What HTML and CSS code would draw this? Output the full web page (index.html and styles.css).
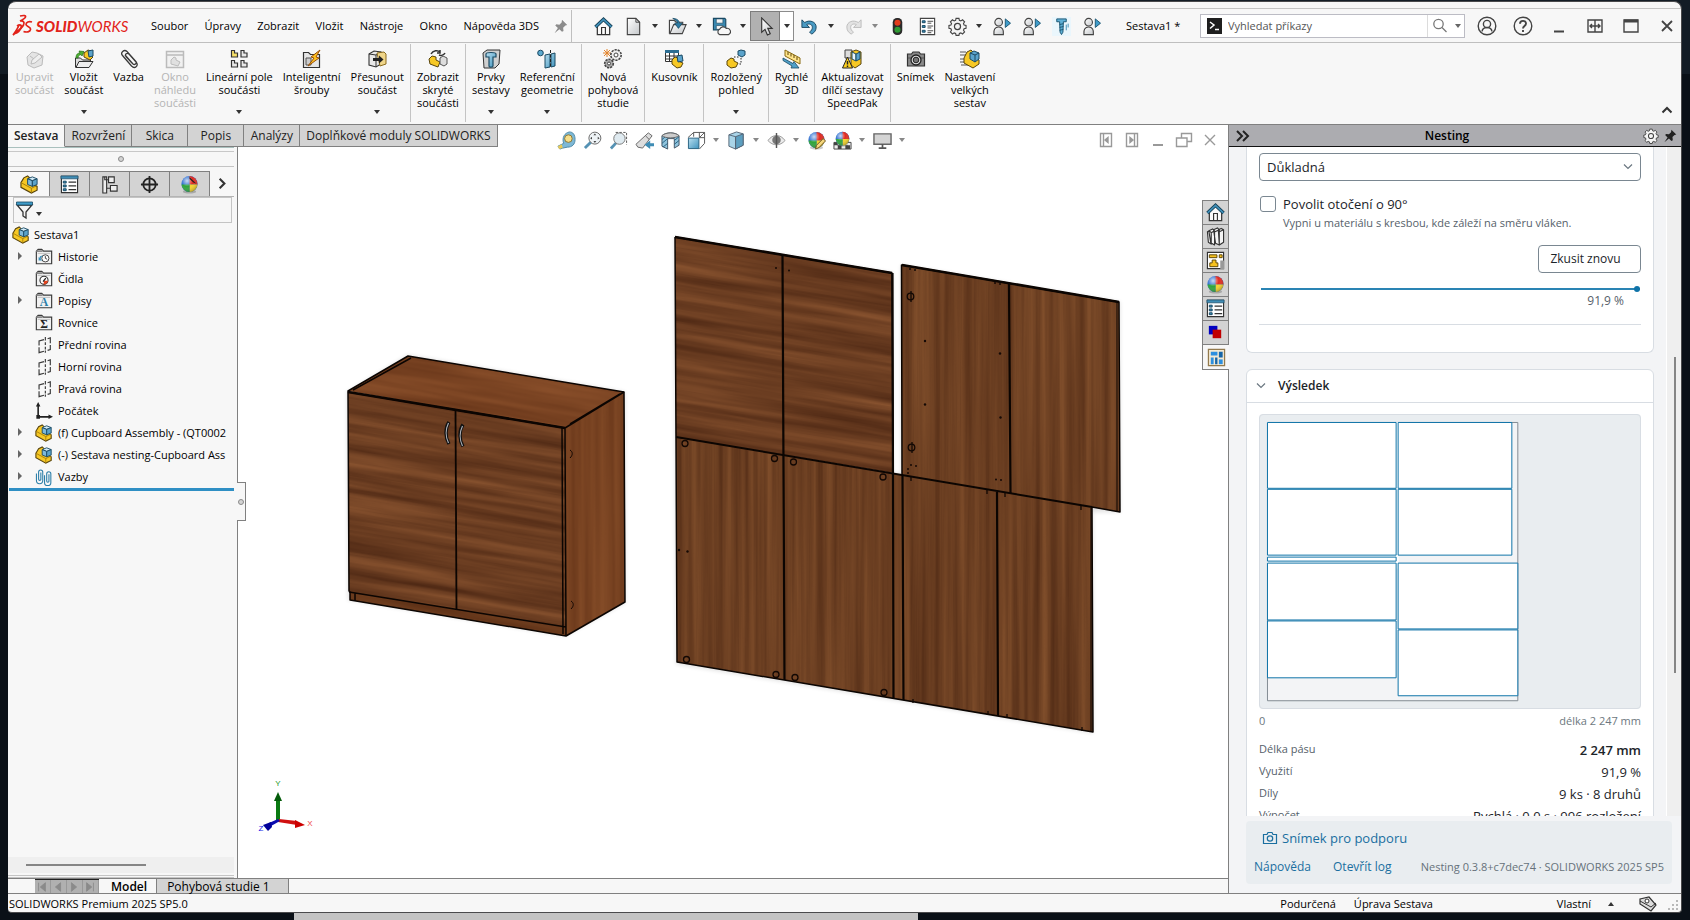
FILE: index.html
```html
<!DOCTYPE html>
<html lang="cs">
<head>
<meta charset="utf-8">
<title>SOLIDWORKS - Sestava1</title>
<link rel="stylesheet" href="styles.css">
</head>
<body>
<svg class="defs" aria-hidden="true">
  <defs>
    <linearGradient id="steel" x1="0" y1="0" x2="1" y2="1"><stop offset="0" stop-color="#fff"/><stop offset="1" stop-color="#c4c7ca"/></linearGradient>
    <linearGradient id="blue" x1="0" y1="0" x2="1" y2="1"><stop offset="0" stop-color="#b9dff0"/><stop offset="1" stop-color="#3f93bd"/></linearGradient>
    <radialGradient id="shine" cx=".35" cy=".3" r=".8"><stop offset="0" stop-color="#fff" stop-opacity=".75"/><stop offset=".45" stop-color="#fff" stop-opacity="0"/><stop offset="1" stop-color="#000" stop-opacity=".35"/></radialGradient>
  </defs>
  <symbol id="asm" viewBox="0 0 20 20">
    <path d="M1 8 4 3 8 1l2 2v5l8 4v4l-6 3-11-6z" fill="#f7c824" stroke="#59450c" stroke-width="1.2"/>
    <path d="M1 8l11 6v5M12 14l6-3" fill="none" stroke="#a87f08"/>
    <path d="M8 4l5-2 5 2-5 2z" fill="#d3ebf7" stroke="#1b4a63"/>
    <path d="M8 4l5 2v6l-5-2z" fill="#7fbadb" stroke="#1b4a63"/>
    <path d="M13 6l5-2v6l-5 2z" fill="#5ba3cb" stroke="#1b4a63"/>
  </symbol>
  <symbol id="folder" viewBox="0 0 20 20">
    <path d="M1.500 17.500V3.500l2-2h4l2 2h9v14z" fill="#f2f2f2" stroke="#3c3c3c" stroke-width="1.300"/>
    <path d="M1.500 3.500h7" stroke="#8a8a8a" stroke-width="2"/><path d="M3 6h14" stroke="#bbb"/>
  </symbol>
  <symbol id="plane" viewBox="0 0 20 20">
    <path d="M10 4 4.500 5.500v5M4.500 12.500v6L10 17M14 3l3-1v6M17 10v5l-3 1" fill="none" stroke="#3a3a3a" stroke-width="1.300"/>
    <path d="M11.500 1v4M11.500 7v3M11.500 12v3M11.500 16v2.500" stroke="#3a3a3a" stroke-width="1.300"/>
  </symbol>
  <symbol id="ball" viewBox="0 0 20 20">
    <ellipse cx="10" cy="17.500" rx="7" ry="2" fill="#000" opacity=".2"/>
    <circle cx="10" cy="9.500" r="8.500" fill="#2f6fd0"/>
    <path d="M10 1a8.500 8.500 0 0 1 8.400 9L10 10z" fill="#e02a20"/>
    <path d="M10 10h8.400A8.500 8.500 0 0 1 10 18z" fill="#f5d42a"/>
    <path d="M10 10v8a8.500 8.500 0 0 1-8.400-8z" fill="#2fa43c"/>
    <circle cx="10" cy="9.500" r="8.500" fill="url(#shine)"/>
  </symbol>
  <symbol id="list" viewBox="0 0 20 20">
    <path d="M1.500 1.500h17v17h-17z" fill="#fff" stroke="#333" stroke-width="1.200"/><path d="M1 1h18v3H1z" fill="#3f8db5" stroke="#22516b" stroke-width=".8"/>
    <path d="M3.500 6.500h3v2h-3zM3.500 10.500h3v2h-3zM3.500 14.500h3v2h-3z" fill="#3f8db5" stroke="#174862"/>
    <path d="M9 7.500h8M9 11.500h8M9 15.500h8" stroke="#333" stroke-width="1.300"/>
  </symbol>
  <symbol id="home" viewBox="0 0 20 20">
    <path d="M3.500 9v9.500h13V9L10 3z" fill="#fafafa" stroke="#333" stroke-width="1.300"/>
    <path d="M8 18v-7h4v7" fill="#fff" stroke="#333" stroke-width="1.200"/>
    <path d="M1.500 10.500 10 2.500l8.500 8" fill="none" stroke="#163f55" stroke-width="3.600"/><path d="M1.700 10.300 10 2.500l8.300 7.800" fill="none" stroke="#3f8fb8" stroke-width="1.800"/>
  </symbol>
  <symbol id="gear" viewBox="0 0 20 20">
    <path d="M8.300 1h3.400l.5 2.300 1.700.7 2-1.300 2.400 2.400-1.300 2 .7 1.700 2.300.5v3.400l-2.300.5-.7 1.700 1.300 2-2.400 2.400-2-1.300-1.700.7-.5 2.300H8.300l-.5-2.300-1.700-.7-2 1.300-2.400-2.400 1.300-2-.7-1.700L0 12.700V9.300l2.300-.5.700-1.700-1.300-2 2.400-2.400 2 1.300 1.700-.7z" transform="translate(1 .5) scale(.9)" fill="#f4f4f4" stroke="#444" stroke-width="1.300"/>
    <circle cx="10" cy="10" r="3.200" fill="none" stroke="#444" stroke-width="1.300"/>
  </symbol>
  <symbol id="person" viewBox="0 0 20 20">
    <path d="M2 18.500c-.5-5 1-8 5-8s5.500 3 5 8z" fill="url(#steel)" stroke="#444" stroke-width="1.200"/>
    <circle cx="7" cy="5.500" r="4" fill="url(#steel)" stroke="#444" stroke-width="1.200"/>
    <path d="M14 2l5.500 4.500L14 11z" fill="#3f9bc9" stroke="#1b5673"/>
  </symbol>
  <symbol id="pin" viewBox="0 0 20 20"><path d="M12 1l7 7-2.500.5-3 3 .5 4.500-2 1-3.500-3.500L2 19l4.500-7L3 8.500 4.500 7l4 .5 3-3z"/></symbol>
  <symbol id="caret" viewBox="0 0 8 8"><path d="M1 2h6L4 6z"/></symbol>
  <symbol id="clips" viewBox="0 0 20 20"><path d="M6.500 5v7.500a1 1 0 0 1-2.500 0V4.500a2.300 2.300 0 0 1 4.600 0v9.500a3.500 3.500 0 0 1-7 0V6M15.500 7v7.500a1 1 0 0 1-2.500 0V6.500a2.300 2.300 0 0 1 4.600 0V16a3.500 3.500 0 0 1-7 0V8" fill="none" stroke="#2b7ea8" stroke-width="1.200"/></symbol>
</svg>

<div class="window">
  <header class="titlebar">
    <div class="logo" role="img" aria-label="SOLIDWORKS">
      <svg width="22" height="24" viewBox="0 0 22 24" fill="none" stroke="#e2231a" stroke-width="1.700"><path d="M8 2c4-1 6-.5 5.500 1C13 4.500 10 6 8 7c3-.5 5 1 3.500 4C10 14 6 17 1 21c3-4 5-7 6-10"/><path d="M5 12c3-2 5-1 4 2-1 2.500-4 5-6 5.500"/><path d="M20 8c-3-1-6 0-6 2.500 0 2 5 2 4.500 5-.5 2.500-4 3-7 2"/></svg>
      <span class="logo-text"><b>SOLID</b>WORKS</span>
    </div>
    <nav class="menu">
      <a href="#">Soubor</a><a href="#">Úpravy</a><a href="#">Zobrazit</a><a href="#">Vložit</a><a href="#">Nástroje</a><a href="#">Okno</a><a href="#">Nápověda 3DS</a>
    </nav>
    <button class="menu-pin" aria-label="Připnout"><svg width="15" height="15" fill="#8c8c8c"><use href="#pin"/></svg></button>
    <div class="quick">
      <button class="ic" aria-label="Domů"><svg><use href="#home"/></svg></button>
      <button class="ic" aria-label="Nový"><svg viewBox="0 0 20 20"><path d="M3.500 1.500h9l4 4v13h-13z" fill="url(#steel)" stroke="#444" stroke-width="1.200"/><path d="M12.500 1.500v4h4" fill="none" stroke="#444"/></svg></button>
      <button class="dd" aria-label="Nový: volby"><svg><use href="#caret"/></svg></button>
      <button class="ic" aria-label="Otevřít"><svg viewBox="0 0 20 20"><path d="M1.500 17.500v-14h5l2 2h7v4" fill="url(#steel)" stroke="#444" stroke-width="1.200"/><path d="M2 17.500 6 8h13l-4 9.500z" fill="url(#steel)" stroke="#444" stroke-width="1.200"/><path d="M5 1.500c4 0 7 2 7 5h3L11 12 7 6.500h3c0-2-2-3.500-5-5z" fill="#2d7ba3" stroke="#174862" stroke-width=".8"/></svg></button>
      <button class="dd" aria-label="Otevřít: volby"><svg><use href="#caret"/></svg></button>
      <button class="ic" aria-label="Uložit"><svg viewBox="0 0 20 20"><path d="M1.500 1.500h12l1 1v11h-13z" fill="#3a89b1" stroke="#1b4a63" stroke-width="1.200"/><path d="M4.500 2h7v4.500h-7zM4.500 9h7v4h-7z" fill="#f4f4f4" stroke="#1b4a63" stroke-width=".7"/><path d="M8 18.500a3 3 0 0 1 0-5.500 4 4 0 0 1 7-1 3.500 3.500 0 0 1 2.500 6.500z" fill="#f7f7f7" stroke="#444" stroke-width="1.200"/></svg></button>
      <button class="dd" aria-label="Uložit: volby"><svg><use href="#caret"/></svg></button>
      <button class="ic selected" aria-label="Vybrat"><svg viewBox="0 0 20 20"><path d="M6 1v15l3.500-3 2.500 6 3-1.300-2.600-5.700H17z" fill="url(#steel)" stroke="#333" stroke-width="1.200"/></svg></button>
      <button class="dd boxed" aria-label="Vybrat: volby"><svg><use href="#caret"/></svg></button>
      <button class="ic" aria-label="Zpět"><svg viewBox="0 0 20 20"><path d="M2 3v8h8L7 8c3-1.500 6 0 6 3 0 2-1 3.500-3 5l2.500 2c3-2 4.500-4 4.500-7.500C17 5 10 2.500 5 5.800z" fill="#4a9bc4" stroke="#1b4a63"/></svg></button>
      <button class="dd" aria-label="Zpět: volby"><svg><use href="#caret"/></svg></button>
      <button class="ic" aria-label="Znovu"><svg viewBox="0 0 20 20"><path d="M18 3v8h-8l3-3c-3-1.500-6 0-6 3 0 2 1 3.500 3 5l-2.500 2C4.500 16 3 14 3 10.500 3 5 10 2.500 15 5.800z" fill="#e3e3e3" stroke="#bdbdbd"/></svg></button>
      <button class="dd dim" aria-label="Znovu: volby"><svg><use href="#caret"/></svg></button>
      <button class="ic" aria-label="Přestavět"><svg viewBox="0 0 20 20"><rect x="5" y="1" width="10" height="18" rx="4.500" fill="#2b2b2b"/><circle cx="10" cy="6" r="3.200" fill="#e33c1d"/><circle cx="10" cy="13.500" r="3.200" fill="#2f9a33"/></svg></button>
      <button class="ic" aria-label="Vlastnosti souboru"><svg viewBox="0 0 20 20"><path d="M2.500 1.500h15v17h-15z" fill="#fff" stroke="#444" stroke-width="1.200"/><path d="M4.500 4h3v2h-3zM4.500 9h3v2h-3zM4.500 14h3v2h-3z" fill="#3f8db5" stroke="#174862"/><path d="M10 4.500h6M10 6.500h4M10 9.500h6M10 11.500h4M10 14.500h6M10 16.500h4" stroke="#444"/></svg></button>
      <button class="ic" aria-label="Možnosti"><svg><use href="#gear"/></svg></button>
      <button class="dd" aria-label="Možnosti: volby"><svg><use href="#caret"/></svg></button>
      <button class="ic" aria-label="Makro 1"><svg><use href="#person"/></svg></button>
      <button class="ic" aria-label="Makro 2"><svg><use href="#person"/></svg></button>
      <button class="ic tint" aria-label="Šrouby"><svg viewBox="0 0 20 20"><path d="M5 2h10v3h-3l-.5 11L10 18.500 8.500 16 8 5H5z" fill="#5fb0d6" stroke="#1b5673"/><path d="M8 8l4-1M8 11l4-1M8 14l4-1" stroke="#1b5673"/><path d="M15 8v6M17 7v4" stroke="#3f8db5"/></svg></button>
      <button class="ic" aria-label="Makro 3"><svg><use href="#person"/></svg></button>
    </div>
    <span class="doc-name">Sestava1 *</span>
    <div class="search">
      <svg width="15" height="16" viewBox="0 0 15 16"><path d="M0 0h15v16H0z" fill="#1f1f1f"/><path d="M3 4l4 3-4 3.500M8 11.500h4" fill="none" stroke="#fff" stroke-width="1.500"/></svg>
      <input type="text" aria-label="Vyhledat příkazy" placeholder="Vyhledat příkazy">
      <button class="search-go" aria-label="Hledat"><svg width="16" height="16" viewBox="0 0 16 16" fill="none" stroke="#777" stroke-width="1.300"><circle cx="6.500" cy="6" r="4.700"/><path d="M10 9.500l4.500 4.500"/></svg><svg class="tiny"><use href="#caret"/></svg></button>
    </div>
    <div class="winbtns">
      <button aria-label="Účet"><svg viewBox="0 0 20 20"><circle cx="10" cy="10" r="8.800"/><circle cx="10" cy="8" r="3.600"/><path d="M5 15.500c.5-3.500 2.500-4 5-4s4.500.5 5 4"/></svg></button>
      <button aria-label="Nápověda"><svg viewBox="0 0 20 20"><circle cx="10" cy="10" r="8.800"/><path d="M7 7.800C7 4 13 4 13 7.500c0 2.500-3 2.500-3 5M10 14v2" stroke-width="1.900"/></svg></button>
      <button aria-label="Minimalizovat"><svg viewBox="0 0 20 20"><path d="M5 15.500h10" stroke-width="2"/></svg></button>
      <button aria-label="Rozdělit"><svg viewBox="0 0 20 20"><path d="M3 4h14v12H3zM10 4v12M5 10h10M7 8l-2 2 2 2M13 8l2 2-2 2"/></svg></button>
      <button aria-label="Maximalizovat"><svg viewBox="0 0 20 20"><path d="M3 4h14v12H3z"/><path d="M3 5h14" stroke-width="3"/></svg></button>
      <button aria-label="Zavřít"><svg viewBox="0 0 20 20"><path d="M5 5l10 10M15 5L5 15" stroke-width="1.800"/></svg></button>
    </div>
  </header>

  <div class="ribbon">
    <div class="group">
      <button disabled><svg viewBox="0 0 20 20"><path d="M2 8l5-5 5 1 6 3-1 9-8 3-6-3z" fill="#e4e4e4" stroke="#bbb"/><path d="M6 15l1-4 7-6 3 3-7 6zM5 7l4 3" fill="#efefef" stroke="#bbb"/></svg><span>Upravit<br>součást</span></button>
      <button><svg viewBox="0 0 20 20"><path d="M1.500 18.500V9h5l2 2h8v3" fill="#ddd" stroke="#333"/><path d="M2 18.500l3-6h14l-4 6z" fill="#eee" stroke="#333"/><path d="M2 9c0-4 2-5 4-5L5 2l5 .5L8 7 7 5.500C5 6 4 7 4 9z" fill="#4fb233" stroke="#1d6a12" stroke-width=".7"/><path d="M10 4l4-3 3 1v4l2 2-3 3-6-3z" fill="#f7c824" stroke="#59450c"/><path d="M14 2l5-1v6l-4 1z" fill="#5ba3cb" stroke="#1b4a63"/></svg><span>Vložit<br>součást</span><svg class="tiny"><use href="#caret"/></svg></button>
      <button><svg viewBox="0 0 20 20"><path d="M6 6l8 9a2 2 0 0 0 3-2.500L8 2.500C5 0 1 3.500 3.500 6.500l9 10.500c3.500 3.500 7-.5 5-3.500L10 5C8 3.500 5.500 5 7 7.500l6 6.500" fill="none" stroke="#3a3a3a" stroke-width="1.300"/></svg><span>Vazba</span></button>
      <button disabled><svg viewBox="0 0 20 20"><path d="M1.500 2.500h17v16h-17zM1.500 6h17" fill="#f1f1f1" stroke="#bbb" stroke-width="1.500"/><path d="M6 11l3-3 2 1v2l4 2-2 4-7-2z" fill="#e0e0e0" stroke="#bbb"/></svg><span>Okno<br>náhledu<br>součásti</span></button>
      <button><svg viewBox="0 0 20 20" stroke="#333" stroke-width="1.200"><path d="M2.500 8V1.500h3V4h3v4z" fill="#f7e06a"/><path d="M12 8V1.500h3V4h3v4zM2.500 18v-6.500h3V14h3v4zM12 18v-6.500h3V14h3v4z" fill="#e8e8e8"/></svg><span>Lineární pole<br>součásti</span><svg class="tiny"><use href="#caret"/></svg></button>
      <button><svg viewBox="0 0 20 20"><path d="M1.500 18.500v-15h5l2 2h9v13z" fill="#e6e6e6" stroke="#333" stroke-width="1.200"/><path d="M4 9h5v7H4z" fill="#ccc" stroke="#555"/><path d="M18 1l-9 7 3 1-6 8 11-8-3-1z" fill="#ffc21e" stroke="#9a4f06"/></svg><span>Inteligentní<br>šrouby</span></button>
      <button><svg viewBox="0 0 20 20"><path d="M2 5l5-3 7 1v12l-5 3-7-2z" fill="#e8e8e8" stroke="#333" stroke-width="1.100"/><path d="M2 5l7 1v12M9 6l5-3" fill="none" stroke="#333"/><path d="M10 4l7-1 2 2v10l-6 2z" fill="#f0d68a" stroke="#8b6b1d"/><path d="M6 9h6V6.500l4.500 4-4.500 4V12H6z" fill="#222"/></svg><span>Přesunout<br>součást</span><svg class="tiny"><use href="#caret"/></svg></button>
    </div>
    <div class="group">
      <button><svg viewBox="0 0 20 20"><path d="M1 10l3-3 4 1v3l4 2-2 5-8-3z" fill="#f7c824" stroke="#59450c"/><path d="M12 9l3-2 4 2v6l-3 2-4-2z" fill="#ddd" stroke="#555"/><path d="M3 5c2-4 7-4 9-2M12 1v3H9M17 4c-1 2-4 3-6 2" fill="none" stroke="#333" stroke-width="1.500"/></svg><span>Zobrazit<br>skryté<br>součásti</span></button>
    </div>
    <div class="group">
      <button><svg viewBox="0 0 20 20"><path d="M2 4l4-3h13l-1 14-4 4H3z" fill="#cfcfcf" stroke="#333"/><path d="M5 5c0-2 10-2 10 0v3h-3v9c0 1.500-4 1.500-4 0V8H5z" fill="url(#blue)" stroke="#1b4a63" stroke-width="1.200"/></svg><span>Prvky<br>sestavy</span><svg class="tiny"><use href="#caret"/></svg></button>
      <button><svg viewBox="0 0 20 20"><circle cx="3.500" cy="4" r="2.800" fill="#5ba9cf" stroke="#1b4a63"/><path d="M8 6l5-1v13l-5 1zM14 5l4-1v13l-4 1z" fill="url(#blue)" stroke="#1b4a63"/><path d="M13.500 1v18" stroke="#222" stroke-dasharray="3 1.500"/></svg><span>Referenční<br>geometrie</span><svg class="tiny"><use href="#caret"/></svg></button>
    </div>
    <div class="group">
      <button><svg viewBox="0 0 20 20"><path d="M4 0v8M0 4h8M1 1l6 6M7 1L1 7" stroke="#e2832a"/><circle cx="13" cy="6" r="5.200" fill="#eee" stroke="#444" stroke-width="1.600" stroke-dasharray="2.200 1"/><circle cx="13" cy="6" r="2" fill="#fff" stroke="#444"/><circle cx="6" cy="14.500" r="4.300" fill="#aaa" stroke="#444" stroke-width="1.600" stroke-dasharray="2.200 1"/><circle cx="6" cy="14.500" r="1.500" fill="#fff" stroke="#444"/></svg><span>Nová<br>pohybová<br>studie</span></button>
    </div>
    <div class="group">
      <button><svg viewBox="0 0 20 20"><path d="M1.500 1.500h13v11h-13z" fill="#fff" stroke="#333"/><path d="M1 1h14v3H1z" fill="#2b6d92"/><path d="M1 7h14M1 10h14M5.500 4v8M10 4v8" stroke="#333"/><path d="M8 11l3-3 3 1v3l5 2-2 4-4 1-5-4z" fill="#f7c824" stroke="#59450c"/><path d="M13 7l5-1 1 6-5 1z" fill="#5ba3cb" stroke="#1b4a63"/></svg><span>Kusovník</span></button>
    </div>
    <div class="group">
      <button><svg viewBox="0 0 20 20"><path d="M1 12l4-3 3 1v2l4 2-2 4-5 1-4-3z" fill="#f7c824" stroke="#59450c"/><path d="M12 2l3-1 4 1v4l-3 2-4-2z" fill="#5ba3cb" stroke="#1b4a63"/><path d="M15 9v6h-3M8 8h6" fill="none" stroke="#222" stroke-dasharray="1.500 1.500"/></svg><span>Rozložený<br>pohled</span><svg class="tiny"><use href="#caret"/></svg></button>
    </div>
    <div class="group">
      <button><svg viewBox="0 0 20 20"><path d="M3 1l15 8v6L3 7z" fill="#ffe48a" stroke="#8a6a10"/><path d="M6 3v3M9 4.500v3M12 6v3M15 8v3" stroke="#5c4608"/><path d="M1 9l10 5.500 1-2 5 6.500-8 0 1-2L1 11.500z" fill="#4fa0c9" stroke="#1b4a63" stroke-width=".8"/></svg><span>Rychlé<br>3D</span></button>
    </div>
    <div class="group">
      <button><svg viewBox="0 0 20 20"><path d="M3 1h7v8H3z" fill="#ddd" stroke="#444"/><path d="M9 3l5-2 5 2v12l-6 4-4-3z" fill="#f7c824" stroke="#59450c"/><path d="M10 3l4 2v7l-4-2z" fill="#eaf5fb" stroke="#1b4a63"/><path d="M14 5l4-2v7l-4 2z" fill="#5ba3cb" stroke="#1b4a63"/><path d="M5.500 8L10.500 19H.5z" fill="#ffd21e" stroke="#222"/><path d="M5.500 12v3.500M5.500 16.500V18" stroke="#222" stroke-width="1.500"/></svg><span>Aktualizovat<br>dílčí sestavy<br>SpeedPak</span></button>
    </div>
    <div class="group">
      <button><svg viewBox="0 0 20 20"><path d="M1.500 5h4l1.500-2h6l1.500 2h4v12h-17z" fill="#8a8a8a" stroke="#333" stroke-width="1.200"/><path d="M2 9h16" stroke="#555"/><circle cx="10" cy="11" r="5" fill="#ddd" stroke="#222" stroke-width="1.300"/><circle cx="10" cy="11" r="2.800" fill="#777" stroke="#222"/></svg><span>Snímek</span></button>
      <button><svg viewBox="0 0 20 20"><path d="M0 3h6M0 6h6M0 10h6M0 13h8M1 16h8" stroke="#555"/><path d="M4 9l3-6 4-2 2 2v5l6 3v4l-6 4-9-5z" fill="#f7c824" stroke="#59450c"/><path d="M10 4l4-2 5 2v6l-4 3-5-3z" fill="#5ba3cb" stroke="#1b4a63"/><path d="M10 4l5 2v7M15 6l4-2" fill="none" stroke="#1b4a63"/></svg><span>Nastavení<br>velkých<br>sestav</span></button>
    </div>
    <button class="collapse" aria-label="Sbalit"><svg width="12" height="8" viewBox="0 0 12 8"><path d="M1.500 6.500L6 2l4.500 4.500" fill="none" stroke="#333" stroke-width="2"/></svg></button>
  </div>

  <main class="main">
    <div class="work">
      <nav class="cmd-tabs" aria-label="Karty příkazů">
        <button class="active">Sestava</button><button>Rozvržení</button><button>Skica</button><button>Popis</button><button>Analýzy</button><button>Doplňkové moduly SOLIDWORKS</button>
      </nav>
      <div class="upper">
        <aside class="tree-panel">
          <div class="grip-bar"><i class="knob"></i></div>
          <div class="tree-tabs">
            <button class="active" aria-label="Strom"><svg><use href="#asm"/></svg></button>
            <button aria-label="Vlastnosti"><svg><use href="#list"/></svg></button>
            <button aria-label="Konfigurace"><svg viewBox="0 0 20 20" fill="#eee" stroke="#333" stroke-width="1.200"><path d="M3 2h4v17H3zM7 5h4M7 14h4M5 2v3h2"/><path d="M9 2h6v6H9zM11 11h7v6h-7z"/></svg></button>
            <button aria-label="Kóty"><svg viewBox="0 0 20 20" fill="none" stroke="#222" stroke-width="1.900"><circle cx="10" cy="10" r="6.500"/><path d="M10 1v18M1 10h18"/></svg></button>
            <button aria-label="Vzhledy"><svg viewBox="0 0 20 20"><use href="#ball"/><path d="M10 2l7 7-3-1-4-4z" fill="#222"/></svg></button>
            <button class="more" aria-label="Další"><svg viewBox="0 0 20 20" fill="none" stroke="#333" stroke-width="2.200"><path d="M7 5l5 5-5 5"/></svg></button>
          </div>
          <button class="filter" aria-label="Filtr"><svg width="20" height="20" viewBox="0 0 20 20"><path d="M2 5h15l-6 7v6l-3-2v-4z" fill="#f3f3f3" stroke="#333" stroke-width="1.300"/><path d="M1.500 2h16v3h-16z" fill="#3f9cc9" stroke="#1b4a63" stroke-width=".8"/></svg><svg class="tiny"><use href="#caret"/></svg></button>
          <ul class="tree">
            <li class="root"><svg><use href="#asm"/></svg><span>Sestava1</span></li>
            <li class="ex"><svg viewBox="0 0 20 20"><use href="#folder"/><circle cx="11.500" cy="11.500" r="4" fill="#fff" stroke="#333"/><path d="M11.500 9v2.500l2 1" fill="none" stroke="#333"/><path d="M4 10v4h4l-1.500-1.500C6 11 7 9.500 9 9 7 8 5 9 5 11z" fill="#3a8fba"/></svg><span>Historie</span></li>
            <li><svg viewBox="0 0 20 20"><use href="#folder"/><circle cx="10" cy="11.500" r="4.500" fill="#fff" stroke="#333" stroke-width="1.200"/><path d="M10 12l4.500 0a4.500 4.500 0 0 1-5 4z" fill="#e2431e"/><path d="M9 13l3-4" stroke="#222" stroke-width="1.500"/></svg><span>Čidla</span></li>
            <li class="ex"><svg viewBox="0 0 20 20"><use href="#folder"/><text x="10" y="16" class="glyph blue">A</text></svg><span>Popisy</span></li>
            <li><svg viewBox="0 0 20 20"><use href="#folder"/><text x="10" y="16" class="glyph">Σ</text></svg><span>Rovnice</span></li>
            <li><svg><use href="#plane"/></svg><span>Přední rovina</span></li>
            <li><svg><use href="#plane"/></svg><span>Horní rovina</span></li>
            <li><svg><use href="#plane"/></svg><span>Pravá rovina</span></li>
            <li><svg viewBox="0 0 20 20"><path d="M3.500 3v13.500H17" fill="none" stroke="#222" stroke-width="1.800"/><path d="M3.500 0L6 5H1zM20 16.500L15 14v5zM1.500 14.500h4v4h-4z" fill="#222"/></svg><span>Počátek</span></li>
            <li class="ex"><svg><use href="#asm"/></svg><span>(f) Cupboard Assembly - (QT0002</span></li>
            <li class="ex"><svg><use href="#asm"/></svg><span>(-) Sestava nesting-Cupboard Ass</span></li>
            <li class="ex"><svg><use href="#clips"/></svg><span>Vazby</span></li>
          </ul>
          <div class="rollback"></div>
          <div class="hscroll"><i></i></div>
          <div class="foot-lines"></div>
        </aside>

        <section class="view" aria-label="Grafická oblast">
          <svg class="scene" viewBox="238 125 990 753" preserveAspectRatio="xMidYMid meet">
            <defs>
              <filter id="grainH" x="0" y="0" width="100%" height="100%" color-interpolation-filters="sRGB"><feTurbulence type="fractalNoise" baseFrequency=".004 .1" numOctaves="5" seed="8"/><feColorMatrix values=".3 0 0 0 .27  .22 0 0 0 .13  .14 0 0 0 .06  0 0 0 0 1"/></filter>
              <filter id="grainV" x="0" y="0" width="100%" height="100%" color-interpolation-filters="sRGB"><feTurbulence type="fractalNoise" baseFrequency=".12 .002" numOctaves="5" seed="5"/><feColorMatrix values=".24 0 0 0 .3  .18 0 0 0 .155  .11 0 0 0 .075  0 0 0 0 1"/></filter>
              <filter id="grainT" x="0" y="0" width="100%" height="100%" color-interpolation-filters="sRGB"><feTurbulence type="fractalNoise" baseFrequency=".006 .09" numOctaves="3" seed="3"/><feColorMatrix values=".2 0 0 0 .38  .15 0 0 0 .19  .1 0 0 0 .085  0 0 0 0 1"/></filter>
              <filter id="grainS" x="0" y="0" width="100%" height="100%" color-interpolation-filters="sRGB"><feTurbulence type="fractalNoise" baseFrequency=".1 .002" numOctaves="3" seed="11"/><feColorMatrix values=".18 0 0 0 .38  .14 0 0 0 .19  .09 0 0 0 .085  0 0 0 0 1"/></filter>
              <filter id="soft"><feGaussianBlur stdDeviation="2"/></filter>
              <clipPath id="doors"><path d="M348 392l217 36 1 199-217-35z"/></clipPath>
              <clipPath id="lid"><path d="M348 391l60-35 216 36-59 36z"/></clipPath>
              <clipPath id="side"><path d="M565 428l59-36 1 210-59 34z"/></clipPath>
              <clipPath id="plinth"><path d="M350 590l216 36v10l-216-36z"/></clipPath>
              <clipPath id="p12"><path d="M675 237l217 36 1 200-217-36z"/></clipPath>
              <clipPath id="pv"><path d="M902 265l217 37 1 210-28-5 1 225-416-70-1-225 226 38z"/></clipPath>
            </defs>
            <g fill="#000" opacity=".12" filter="url(#soft)"><path d="M347 392l61-37 217 37v211l-60 33-217-36zM674 237l219 36v200h8V265l219 37v210h-27v221L676 664z"/></g>
            <g clip-path="url(#plinth)"><rect x="340" y="500" width="240" height="60" transform="skewY(9.400)" filter="url(#grainT)"/><path d="M340 580h240v60H340z" fill="#3c1e0c" opacity=".25"/></g>
            <g clip-path="url(#doors)"><rect x="346" y="320" width="224" height="230" transform="skewY(9.400)" filter="url(#grainH)"/></g>
            <g clip-path="url(#lid)"><rect x="346" y="240" width="290" height="150" transform="skewY(9.400)" filter="url(#grainT)"/></g>
            <g clip-path="url(#side)"><rect x="560" y="390" width="70" height="250" filter="url(#grainS)"/></g>
            <g clip-path="url(#p12)"><rect x="670" y="110" width="230" height="240" transform="skewY(9.400)" filter="url(#grainH)"/></g>
            <g clip-path="url(#pv)"><rect x="670" y="260" width="455" height="480" filter="url(#grainV)"/></g>
            <g fill="none" stroke="#0b0502" stroke-width="1.500" stroke-linejoin="round">
              <path d="M348 391l60-35 216 36 1 210-59 34-216-36v-8l-1-1z"/>
              <path d="M348 392l217 36 59-36M565 428l1 208M349 592l217 35M355 593v8M353 390l58-32M570 424l50-30M562 427l1 207"/>
              <path d="M348 392l217 36" stroke-width="2.500"/><path d="M455.500 411l1 199" stroke-width="1.800"/>
              <path d="M675 237l217 36 1 200M676 437l-1-200M902 475l-.5-210L1119 302l1 210-28-5 1 225-416-70-1-225"/>
              <path d="M675 237l217 36M902 265l217 37" stroke-width="2.600"/>
              <path d="M676 437l416 70" stroke-width="2"/>
              <path d="M782.500 255l2 425M892.500 273l1 426M902.500 475l1 225M1009 283l1.500 210M997 492l1 224" stroke-width="2.200"/>
              <path d="M1117 303v208M1091 508v223" stroke-width="1"/>
            </g>
            <g fill="none" stroke="#120804" stroke-width="1.300">
              <circle cx="685" cy="443.500" r="3"/><circle cx="774.500" cy="458.500" r="3"/><circle cx="793.500" cy="462" r="3"/><circle cx="883" cy="477" r="3"/>
              <circle cx="686.500" cy="659.500" r="3"/><circle cx="776" cy="674.500" r="3"/><circle cx="795" cy="677.500" r="3"/><circle cx="884" cy="692.500" r="3"/>
              <circle cx="910.500" cy="296.500" r="3.300"/><circle cx="911.500" cy="447.500" r="3.300"/><path d="M911 291v11M912 442v11"/>
              <path d="M911 477v4M987 490v4M1005 493v4M1081 506v4M913 699v4M988 711v4M1007 714v4M1082 727v4"/>
              <path d="M570 450c3 2 3 5 0 8M571 601c3 2 3 5 0 8" stroke-width="1"/>
            </g>
            <g fill="#140905"><circle cx="776" cy="268" r="1"/><circle cx="789" cy="270.500" r="1"/><circle cx="925" cy="341" r="1.200"/><circle cx="925" cy="404.500" r="1.200"/><circle cx="1000" cy="353.500" r="1.200"/><circle cx="1000.500" cy="417.500" r="1.200"/><circle cx="911" cy="465" r="1"/><circle cx="916" cy="466" r="1"/><circle cx="908" cy="469" r="1"/><circle cx="908" cy="473" r="1"/><circle cx="996" cy="479.500" r="1"/><circle cx="1001" cy="480" r="1"/><circle cx="679" cy="550" r="1.200"/><circle cx="687.500" cy="551.500" r="1.200"/><circle cx="910" cy="269" r="1"/><circle cx="915" cy="270" r="1"/><circle cx="995" cy="283" r="1"/><circle cx="1000" cy="284" r="1"/></g>
            <g fill="none"><path d="M449 422c-4 6-4 15 0 22M463 424.500c-4 6-4 15 0 22" stroke="#111" stroke-width="3.400"/><path d="M448.500 423c-3 6-3 14 0 20M462.500 426c-3 6-3 14 0 20" stroke="#aab0b8" stroke-width="1.200"/></g>
            <g class="triad">
              <path d="M276 797h4v24h-4z" fill="#0a7a12"/><path d="M278 792l4 9h-8z" fill="#045c0a"/>
              <path d="M279 819l18 2v4l-19-3z" fill="#d01010"/><path d="M305 825l-10-5v8z" fill="#c00"/>
              <path d="M278 819l-9 4 2 3 9-5z" fill="#0a0ab0"/><path d="M263 825l8-3 1 5-4 4z" fill="#00009a"/>
              <text x="278" y="786" fill="#1f9a2b">Y</text><text x="310" y="826" fill="#f04a4a">X</text><text x="261" y="831" fill="#1414e6">Z</text>
            </g>
          </svg>

          <div class="hud">
            <div class="hud-tools">
              <button aria-label="Měřit"><svg viewBox="0 0 20 20"><path d="M1 16l6-3c-2-6 1-11 6-12 4 0 6 3 6 8s-3 8-8 8l-5 1-3 1z" fill="#7db8d6" stroke="#4d87a5"/><circle cx="12" cy="8" r="4" fill="#f6df8a" stroke="#8a7430"/><path d="M1 16l4-2 1 4-4 1z" fill="#e9c958"/></svg></button>
              <button aria-label="Lupa"><svg viewBox="0 0 20 20"><path d="M9 11L2 18" stroke="#5592b4" stroke-width="3"/><circle cx="12.500" cy="7.500" r="6.300" fill="#eef3f6" stroke="#666"/><path d="M12.500 2.500l1.500 2h-3zM12.500 12.500l1.500-2h-3zM7.500 7.500l2-1.500v3zM17.500 7.500l-2-1.500v3z" fill="#444"/></svg></button>
              <button aria-label="Lupa oblasti"><svg viewBox="0 0 20 20"><path d="M7 1.500h11.500v13" fill="none" stroke="#555" stroke-dasharray="2.500 1.500"/><path d="M8 12L2 18.500" stroke="#5592b4" stroke-width="3"/><circle cx="11" cy="8" r="6" fill="#dfeaf0" stroke="#777"/></svg></button>
              <button aria-label="Předchozí pohled"><svg viewBox="0 0 20 20"><path d="M1 14L14 2l4 3-10 13-5-1z" fill="#ddd" stroke="#666"/><path d="M11 5l4 4" stroke="#666"/><path d="M20 13h-4v-3l-6 4.500 6 4.500v-3h4z" fill="#3f8db5"/></svg></button>
              <button aria-label="Řez"><svg viewBox="0 0 20 20"><path d="M1 5c4-4 14-4 18 0v10l-5 3V8H7v11l-6-3z" fill="#8fc3dd" stroke="#456"/><path d="M1 9l6-5M1 13l6-5M2 17l5-4M14 10l5-4M14 14l5-4" stroke="#27617f"/><path d="M1 5c4-4 14-4 18 0-4 3-14 3-18 0z" fill="#ccc" stroke="#666"/></svg></button>
              <button aria-label="Orientace"><svg viewBox="0 0 20 20"><path d="M7 1.500h11.500V13M7 1.500V6M18.500 1.500L13 7M13 1.500V7M18 7h-5M1 7l6-5.500M13 19l5.500-6" fill="none" stroke="#555"/><path d="M1.500 7.500h11v11h-11z" fill="url(#blue)" stroke="#27617f"/></svg></button>
              <button class="dd" aria-label="Orientace: volby"><svg><use href="#caret"/></svg></button>
              <button aria-label="Styl"><svg viewBox="0 0 20 20"><path d="M2 4l8-3 7 2v12l-8 4-7-3z" fill="#a9d4e8" stroke="#567"/><path d="M9 6l8-3v12l-8 4z" fill="#5c9fc0" stroke="#567"/><path d="M2 4l7 2v13" fill="none" stroke="#567"/></svg></button>
              <button class="dd" aria-label="Styl: volby"><svg><use href="#caret"/></svg></button>
              <button aria-label="Skrýt"><svg viewBox="0 0 20 20"><path d="M1 10c5-7 13-7 18 0-5 6-13 6-18 0z" fill="#ececec" stroke="#999"/><circle cx="10" cy="9.500" r="4.500" fill="#777"/><path d="M10 2v16" stroke="#555" stroke-width="1.500"/></svg></button>
              <button class="dd" aria-label="Skrýt: volby"><svg><use href="#caret"/></svg></button>
              <button aria-label="Vzhled"><svg viewBox="0 0 20 20"><use href="#ball"/><path d="M9 19l1-4 7-7 2.500 2.500-7 7z" fill="#f4d67c" stroke="#6b531a"/></svg></button>
              <button aria-label="Scéna"><svg viewBox="0 0 20 20"><path d="M1 12h18v7H1z" fill="#eee" stroke="#444"/><path d="M1 12h4v3H1zM9 12h4v3H9zM5 15h4v4H5zM13 15h5v4h-5z" fill="#444"/><use href="#ball" x="1.500" width="17" height="17"/></svg></button>
              <button class="dd" aria-label="Scéna: volby"><svg><use href="#caret"/></svg></button>
              <button aria-label="Zobrazení"><svg viewBox="0 0 20 20"><path d="M1 3h18v11H1z" fill="#d4d4d4" stroke="#666" stroke-width="1.500"/><path d="M10 14v4M6 18h8" stroke="#555" stroke-width="1.800"/></svg></button>
              <button class="dd" aria-label="Zobrazení: volby"><svg><use href="#caret"/></svg></button>
            </div>
            <div class="hud-win">
              <button aria-label="Panel vlevo"><svg viewBox="0 0 20 20"><path d="M4.500 3.500h11v13h-11zM7.500 3.500v13"/><path d="M12 7.500v5L9 10z" fill="#999"/></svg></button>
              <button aria-label="Panel vpravo"><svg viewBox="0 0 20 20"><path d="M4.500 3.500h11v13h-11zM12.500 3.500v13"/><path d="M8 7.500v5l3-2.500z" fill="#999"/></svg></button>
              <button aria-label="Minimalizovat dokument"><svg viewBox="0 0 20 20"><path d="M5 15h10" stroke-width="2"/></svg></button>
              <button aria-label="Obnovit dokument"><svg viewBox="0 0 20 20"><path d="M7.500 8V3.500h10v8H13M2.500 8H13v8.500H2.500z"/></svg></button>
              <button aria-label="Zavřít dokument"><svg viewBox="0 0 20 20"><path d="M5 5l10 10M15 5L5 15"/></svg></button>
            </div>
          </div>
          <button class="splitter" aria-label="Skrýt strom"><i class="knob"></i></button>
          <nav class="task-tabs" aria-label="Podokno úloh">
            <button aria-label="Zdroje"><svg><use href="#home"/></svg></button>
            <button aria-label="Knihovna"><svg viewBox="0 0 20 20" fill="#f4f4f4" stroke="#333" stroke-width="1.200" stroke-linejoin="round"><path d="M13 3l3-1.500 2.500 1.500v13L14 19zM8 3l4-2 2 2v16l-4-2zM3 4l4-2 2 2v15l-4-2.500zM1.500 5l2-1 2 2v12l-3-2zM5.500 6L9 4M9.500 5L14 3M14 5l4.500-2"/></svg></button>
            <button aria-label="Paleta"><svg viewBox="0 0 20 20"><path d="M1.500 1.500h17v17h-17z" fill="#fff" stroke="#333" stroke-width="1.200"/><path d="M3.500 4h8v3h-8zM14 4h3v3h-3zM6.500 9.500h4v3h2v4H4v-4h2.500z" fill="#f7c21e" stroke="#5c4608"/><path d="M15 10h4v9h-4z" fill="#999"/></svg></button>
            <button aria-label="Vzhledy a scény"><svg><use href="#ball"/></svg></button>
            <button aria-label="Vlastní vlastnosti"><svg><use href="#list"/></svg></button>
            <button aria-label="Porovnání"><svg viewBox="0 0 20 20"><path d="M3 3h9v9H3z" fill="#0000c0"/><path d="M7 7h9v9H7z" fill="#c00000"/></svg></button>
            <button class="active" aria-label="Nesting"><svg viewBox="0 0 20 20"><path d="M1.500 1.500h17v17h-17z" fill="#f2ead6" stroke="#937a4d" stroke-width="1.300"/><path d="M4 4h7v4H4zM4 10h3v7H4z" fill="#2c8fdf"/><path d="M12.500 4h4v6h-4zM8.500 10h2.500v7H8.500z" fill="#1766a8"/><path d="M12.500 12h4v5h-4z" fill="#2c8fdf"/></svg></button>
          </nav>
        </section>
      </div>
      <div class="model-tabs">
        <div class="steps"><button aria-label="První"><svg viewBox="0 0 14 14"><path d="M3 2v10M11 2v10L5 7z"/></svg></button><button aria-label="Předchozí"><svg viewBox="0 0 14 14"><path d="M10 2v10L4 7z"/></svg></button><button aria-label="Následující"><svg viewBox="0 0 14 14"><path d="M4 2v10l6-5z"/></svg></button><button aria-label="Poslední"><svg viewBox="0 0 14 14"><path d="M11 2v10M3 2v10l6-5z"/></svg></button></div>
        <button class="mtab active">Model</button><button class="mtab">Pohybová studie 1</button>
      </div>
    </div>

    <aside class="pane">
      <div class="pane-head">
        <button aria-label="Sbalit podokno"><svg width="16" height="14" viewBox="0 0 16 14" fill="none" stroke="#222" stroke-width="2"><path d="M2 2l5 5-5 5M8 2l5 5-5 5"/></svg></button>
        <h2>Nesting</h2>
        <button aria-label="Nastavení"><svg width="16" height="16"><use href="#gear"/></svg></button>
        <button aria-label="Připnout podokno"><svg width="14" height="14" fill="#222"><use href="#pin"/></svg></button>
      </div>
      <div class="pane-body">
        <div class="cards">
          <section class="card first">
            <div class="select-wrap">
              <select aria-label="Kvalita"><option>Důkladná</option></select>
              <svg width="12" height="8" viewBox="0 0 12 8" fill="none" stroke="#6b7780" stroke-width="1.200"><path d="M2 1.500l4 4 4-4"/></svg>
            </div>
            <div class="check"><input type="checkbox" id="rot"><label for="rot">Povolit otočení o 90°</label></div>
            <p class="hint">Vypni u materiálu s kresbou, kde záleží na směru vláken.</p>
            <button class="retry">Zkusit znovu</button>
            <input class="slider" type="range" aria-label="Průběh" value="100">
            <p class="pct">91,9 %</p>
            <hr>
          </section>
          <section class="card">
            <h3><svg width="12" height="8" viewBox="0 0 12 8" fill="none" stroke="#6b7780" stroke-width="1.200"><path d="M2 1.500l4 4 4-4"/></svg>Výsledek</h3>
            <div class="card-in">
              <svg class="layout" viewBox="0 0 383 296" preserveAspectRatio="xMinYMin meet" fill="#fff" stroke="#0f73a8">
                <path d="M8.500 8.500h251v279H8.500z" fill="#f3f4f6" stroke="#838c93"/>
                <path d="M8 8h132v147H8z" stroke="none"/>
                <path d="M8.500 8.500h129v66H8.500zM8.500 75.500h129v66H8.500zM8.500 143.500h129v4H8.500zM8.500 149.500h129v57H8.500zM8.500 207.500h129v57H8.500zM139.500 8.500h114v66h-114zM139.500 75.500h114v66h-114zM139.500 149.500h120v66h-120zM139.500 216.500h120v66h-120z"/>
              </svg>
              <div class="axis"><span>0</span><span>délka 2 247 mm</span></div>
              <dl>
                <dt>Délka pásu</dt><dd><b>2 247 mm</b></dd>
                <dt>Využití</dt><dd>91,9 %</dd>
                <dt>Díly</dt><dd>9 ks · 8 druhů</dd>
                <dt>Výpočet</dt><dd>Rychlá · 0,0 s · 996 rozložení</dd>
              </dl>
            </div>
          </section>
        </div>
        <div class="vscroll"><i></i></div>
      </div>
      <footer class="pane-foot">
        <a class="shot" href="#"><svg width="16" height="14" viewBox="0 0 16 14" fill="none" stroke="#1a6fa0" stroke-width="1.200"><path d="M1.500 12.500v-9H5L6 1.500h4l1 2h3.500v9z"/><circle cx="8" cy="7.500" r="2.700"/></svg>Snímek pro podporu</a>
        <div class="foot-row"><a href="#">Nápověda</a><a href="#">Otevřít log</a><span>Nesting 0.3.8+c7dec74 · SOLIDWORKS 2025 SP5</span></div>
      </footer>
    </aside>
  </main>

  <footer class="status">
    <span class="grow">SOLIDWORKS Premium 2025 SP5.0</span>
    <span class="st-a">Podurčená</span><span class="st-b">Úprava Sestava</span><span>Vlastní</span>
    <svg class="up" viewBox="0 0 8 8"><path d="M1 6h6L4 2z" fill="#333"/></svg>
    <svg width="18" height="16" viewBox="0 0 18 16"><path d="M1 3l9-2 7 8-5 6-11-7z" fill="#ddd" stroke="#333" stroke-width="1.200"/><path d="M1 5l11 6 5-4" fill="none" stroke="#333"/><circle cx="8" cy="5" r="2" fill="#fff" stroke="#333"/></svg>
    <svg class="grip" viewBox="0 0 12 12" fill="#b8b8b8"><path d="M8 0h2v2H8zM8 4h2v2H8zM4 4h2v2H4zM8 8h2v2H8zM4 8h2v2H4zM0 8h2v2H0z"/></svg>
  </footer>
</div>
</body>
</html>
```

FILE: styles.css
```css
* { box-sizing: border-box; }

body {
  margin: 0;
  height: 100vh;
  padding: 1px 8px 7px;
  background:
    linear-gradient(#c3c3c3, #c3c3c3) 294px 100% / 624px 8px no-repeat,
    linear-gradient(#131c25, #131c25) 0 0 / 100% 74px no-repeat,
    #0a1017;
  font: 11px/16px "Open Sans", "Noto Sans", sans-serif;
  color: #000;
  overflow: hidden;
}

button { font: inherit; color: inherit; margin: 0; padding: 0; border: 0; background: none; }
a { color: inherit; text-decoration: none; }
svg { display: block; flex: none; }
.defs { position: absolute; width: 0; height: 0; }

.window {
  display: flex;
  flex-direction: column;
  height: 100%;
  background: #f7f7f7;
  border: 1px solid #4a4a4c;
  border-width: 1px 1px 1px 0;
  border-radius: 8px 8px 4px 4px;
  overflow: hidden;
}

/* title bar */
.titlebar {
  display: flex;
  align-items: center;
  height: 41px;
  padding: 8px 0 0 4px;
  border-bottom: 1px solid #bfbfbf;
  background: linear-gradient(#c4c4c4, #c4c4c4) 0 6px / 100% 1px no-repeat;
}
.logo { display: flex; align-items: center; gap: 2px; color: #e2231a; width: 139px; }
.logo-text { font: italic 15px/16px "Lato", sans-serif; }
.logo-text b { font-weight: 900; }
.menu { display: flex; justify-content: space-between; width: 388px; white-space: nowrap; }
.ic { display: flex; align-items: center; justify-content: center; width: 30px; height: 30px; }
.ic svg { width: 19px; height: 19px; }
.menu-pin { width: 33px; height: 33px; padding-left: 14px; border-right: 1px solid #bfbfbf; }
.quick { display: flex; align-items: center; margin-left: 16px; }
.dd { display: flex; align-items: center; justify-content: center; width: 14px; height: 30px; }
.dd svg, .tiny { width: 8px; height: 8px; fill: #333; }
.dd.dim svg { fill: #888; }
.selected { background: #b1b1b1; border: 1px solid #7d7d7d; }
.boxed { border: 1px solid #8c8c8c; border-left: 0; background: #fff; }
.tint svg { background: #eaf6fc; }
.doc-name { margin-left: 20px; white-space: nowrap; width: 74px; }
.search {
  display: flex;
  align-items: center;
  flex: 1;
  height: 24px;
  padding-left: 6px;
  background: #fff;
  border: 1px solid #bcbcc4;
}
.search input { flex: 1; min-width: 0; margin-left: 4px; border: 0; outline: 0; padding: 0 2px; font: inherit; background: none; }
.search input::placeholder { color: #555; opacity: 1; }
.search-go { display: flex; align-items: center; gap: 6px; height: 22px; padding: 0 2px 0 4px; border-left: 1px solid #dcdcdc; }
.search-go .tiny { fill: #666; }
.winbtns { display: flex; align-items: center; gap: 16px; padding: 0 4px 0 12px; }
.winbtns svg { width: 20px; height: 20px; fill: none; stroke: #444; stroke-width: 1.4; }

/* ribbon */
.ribbon { display: flex; height: 82px; padding: 1px 0 2px 1px; border-bottom: 1px solid #808080; line-height: 13px; }
.group { display: flex; padding: 0 1px; border-right: 1px solid #c4c4c4; }
.group:nth-last-child(2) { border: 0; }
.group button { position: relative; display: flex; flex-direction: column; align-items: center; gap: 1px; padding: 5px 5px 0; text-align: center; white-space: nowrap; }
.group button > svg:first-child { width: 20px; height: 20px; }
.group .tiny { position: absolute; left: 50%; margin-left: -4px; bottom: 6px; }
.group button:disabled { color: #b4b4b4; }
.collapse { margin-left: auto; align-self: flex-end; padding: 0 8px 8px; }

/* work area */
.main { display: flex; flex: 1; min-height: 0; }
.work { position: relative; display: flex; flex-direction: column; flex: 1; min-width: 0; }
.upper { display: flex; flex: 1; min-height: 0; }
.cmd-tabs { position: absolute; z-index: 2; left: 0; top: 0; display: flex; height: 22px; font-size: 12px; }
.cmd-tabs button { min-width: 56px; padding: 0 6px; background: #d3d3d3; border: 1px solid #808080; border-width: 0 1px 1px 0; color: #222; white-space: nowrap; }
.cmd-tabs .active { background: #f7f7f7; border-bottom-color: #f7f7f7; font-weight: 600; }

.tree-panel { display: flex; flex-direction: column; width: 230px; padding-top: 22px; border-right: 1px solid #808080; }
.grip-bar { display: flex; justify-content: center; align-items: center; height: 20px; margin: 0 3px 4px 0; border-top: 1px solid #a9c0bd; border-bottom: 1px solid #c4c4c4; background: linear-gradient(#c8c8c8, #c8c8c8) 0 3px / 100% 1px no-repeat; padding-top: 4px; }
.knob { display: block; width: 6px; height: 6px; border: 1px solid #8a8a8a; border-radius: 50%; background: #d4d4d4; }
.tree-tabs { display: flex; height: 26px; padding-left: 2px; margin-right: 3px; border-bottom: 1px solid #b4b4b4; }
.tree-tabs button { display: flex; flex: none; align-items: center; justify-content: center; width: 40px; background: #d3d3d3; border: 1px solid #808080; border-width: 1px 1px 0 0; }
.tree-tabs .active, .tree-tabs .more { background: #f7f7f7; }
.tree-tabs .more { flex: 1; min-width: 0; border: 0; }
.tree-tabs svg { width: 19px; height: 19px; }
.filter { display: flex; align-items: center; height: 26px; margin: 0 5px 1px 5px; padding-left: 1px; border: 1px solid #c4c4c4; }
.filter .tiny { margin-top: 8px; }
.tree { list-style: none; margin: 0; padding: 0; }
.tree li { position: relative; display: flex; align-items: center; gap: 5px; height: 22px; padding-left: 27px; margin-right: 3px; white-space: nowrap; overflow: hidden; }
.tree li.root { padding-left: 4px; gap: 4px; }
.tree svg { width: 18px; height: 18px; }
.tree .ex::before { content: ""; position: absolute; left: 10px; top: 6px; border: 4px solid transparent; border-left-color: #666; border-right: 0; }
.glyph { font: bold 13px "Liberation Serif", serif; text-anchor: middle; fill: #222; }
.glyph.blue { fill: #2b7ea8; }
.rollback { height: 3px; margin: 0 3px 0 1px; background: #2f8fc4; }
.hscroll { margin-top: auto; height: 16px; margin-right: 3px; padding: 7px 0 0 18px; background: #efefef; }
.hscroll i { display: block; width: 120px; height: 2px; background: #858585; }
.foot-lines { height: 3px; margin: 2px 3px 0 0; border-top: 1px solid #c4c4c4; border-bottom: 1px solid #c4c4c4; }

.view { position: relative; flex: 1; min-width: 0; background: #fff; }
.scene { position: absolute; inset: 0; width: 100%; height: 100%; }
.triad text { font: 8px "Liberation Sans", sans-serif; text-anchor: middle; }
.hud { position: relative; display: flex; justify-content: space-between; padding: 5px 8px 0 315px; }
.hud-tools, .hud-win { display: flex; align-items: center; }
.hud-tools button { display: flex; align-items: center; justify-content: center; width: 26px; height: 20px; }
.hud-tools .dd { width: 14px; }
.hud-tools svg { width: 19px; height: 19px; }
.hud-tools .dd svg { width: 8px; height: 8px; fill: #888; }
.hud-win { gap: 6px; }
.hud-win svg { width: 20px; height: 20px; fill: none; stroke: #999; stroke-width: 1.4; }
.splitter { position: absolute; left: -1px; top: 357px; display: flex; align-items: center; justify-content: center; width: 9px; height: 39px; background: #f7f7f7; border: 1px solid #808080; border-left: 0; }
.task-tabs { position: absolute; right: -1px; top: 75px; border: 1px solid #808080; border-right: 0; }
.task-tabs button { display: flex; align-items: center; justify-content: center; width: 26px; height: 24px; background: #d3d3d3; border-bottom: 1px solid #808080; border-right: 1px solid #808080; }
.task-tabs .active { background: #f7f7f7; border-bottom: 0; border-right: 0; }
.task-tabs svg { width: 19px; height: 19px; }

.model-tabs { display: flex; height: 16px; padding-left: 27px; border-top: 1px solid #808080; border-bottom: 1px solid #808080; }
.steps { display: flex; gap: 1px; border-top: 1px solid #222; background: #999; padding-right: 1px; }
.steps button { width: 15px; background: #b0b0b0; }
.steps svg { width: 14px; height: 12px; fill: #8a8a8a; stroke: #8a8a8a; }
.mtab { height: 14px; line-height: 13px; padding: 0 18px 0 10px; border-right: 1px solid #808080; background: #d3d3d3; white-space: nowrap; font-size: 12px; }
.mtab.active { padding: 0 9px 0 12px; background: #f7f7f7; font-weight: 600; }

/* nesting pane */
.pane { display: flex; flex-direction: column; width: 453px; background: #f3f4f6; border-left: 1px solid #808080; border-bottom: 1px solid #808080; }
.pane-head { display: flex; align-items: center; gap: 4px; height: 22px; padding: 0 4px 0 6px; background: #acacb0; border-bottom: 1px solid #111; }
.pane-head h2 { flex: 1; margin: 0; font-size: 12px; font-weight: 600; text-align: center; }
.pane-body { display: flex; flex: 1; min-height: 0; overflow: hidden; color: #1c2429; }
.cards { flex: 1; min-width: 0; padding: 0 12px 0 17px; }
.vscroll { width: 15px; padding: 210px 5px 0 7px; background: #efefef; border-left: 1px solid #fff; }
.vscroll i { display: block; width: 2px; height: 316px; background: #858585; }
.card { background: #fff; border: 1px solid #d8dde3; border-radius: 6px; margin-bottom: 16px; }
.card.first { display: flex; flex-direction: column; border-top: 0; border-radius: 0 0 6px 6px; padding: 6px 12px 27px; }
.select-wrap { position: relative; }
.select-wrap select { display: block; width: 100%; height: 28px; padding: 0 7px; appearance: none; font: inherit; font-size: 13px; color: inherit; background: #fff; border: 1px solid #7a8791; border-radius: 4px; }
.select-wrap svg { position: absolute; right: 7px; top: 10px; }
.check { display: flex; align-items: center; gap: 7px; margin-top: 14px; height: 18px; font-size: 13px; }
.check input { appearance: none; width: 16px; height: 16px; margin: 0 0 0 1px; border: 1px solid #7a8791; border-radius: 3px; }
.hint { margin: 1px 0 0 24px; color: #56616a; line-height: 18px; white-space: nowrap; }
.retry { align-self: flex-end; width: 103px; height: 28px; margin-top: 13px; padding-right: 8px; border: 1px solid #7a8791; border-radius: 4px; font-size: 12px; }
.slider { appearance: none; width: auto; height: 6px; margin: 13px 1px 0 2px; background: linear-gradient(#2a84b4, #2a84b4) 0 2px / 100% 2px no-repeat; }
.slider::-webkit-slider-thumb { appearance: none; width: 6px; height: 6px; border-radius: 50%; background: #0f73a8; }
.pct { align-self: flex-end; margin: 0 17px 14px 0; color: #56616a; font-size: 12px; line-height: 18px; }
.card hr { width: 100%; margin: 0; border: 0; border-top: 1px solid #d8dde3; }
.card h3 { display: flex; align-items: center; gap: 11px; height: 33px; margin: 0; padding-left: 8px; border-bottom: 1px solid #d8dde3; font-size: 12px; font-weight: 600; }
.card-in { padding: 11px 12px; }
.layout { width: 100%; background: #e9edf0; border-radius: 4px; outline: 1px solid #d8dde3; outline-offset: -1px; }
.axis { display: flex; justify-content: space-between; margin-top: 4px; color: #6d7880; }
dl { display: grid; grid-template-columns: auto 1fr; margin: 10px 0 0; line-height: 22px; }
dt { color: #56616a; line-height: 20px; }
dd { margin: 0; text-align: right; white-space: nowrap; font-size: 13px; }
dd b { font-weight: 600; }
.pane-foot { margin: 5px 9px 9px 17px; height: 63px; padding: 7px 8px 0; background: #e9edf0; border-radius: 4px; color: #1a6fa0; }
.shot { display: flex; align-items: center; gap: 4px; margin-left: 8px; height: 20px; font-size: 13px; }
.foot-row { display: flex; align-items: center; gap: 22px; height: 20px; margin-top: 9px; white-space: nowrap; }
.foot-row a { font-size: 12px; }
.foot-row span { margin-left: auto; color: #66717a; }

.status { display: flex; align-items: center; height: 18px; padding: 1px 1px 0; white-space: nowrap; }
.grow { flex: 1; }
.st-a { margin-right: 18px; }
.st-b { width: 203px; }
.up { width: 8px; height: 8px; margin: 0 24px 0 16px; }
.grip { width: 12px; height: 12px; margin: 4px 0 0 11px; }
```
